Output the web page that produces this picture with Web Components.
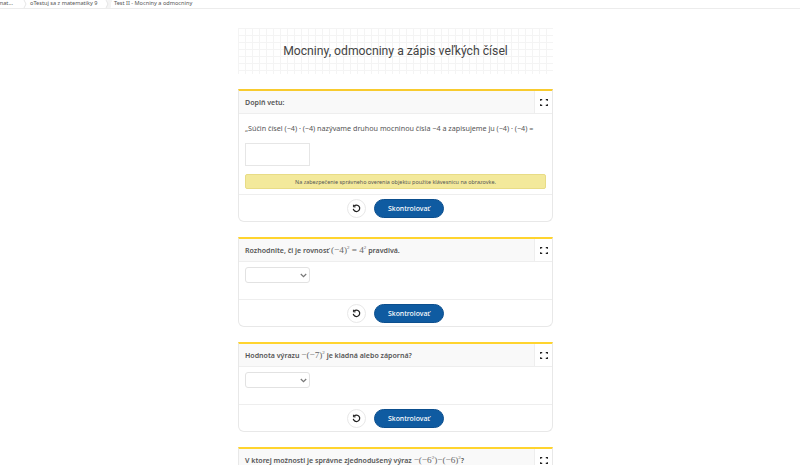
<!DOCTYPE html>
<html lang="sk">
<head>
<meta charset="utf-8">
<title>Test II - Mocniny a odmocniny</title>
<style>
  html, body { margin: 0; height: 465px; overflow: hidden; background: #fff; }
  body { font-family: "Noto Sans", "Liberation Sans", sans-serif; color: #444; }
  i.m { font-family: "Liberation Serif", serif; font-style: normal; font-weight: 400; font-size: 9.2px; color: #666; }
  i.m sup { font-size: 5px; line-height: 0; vertical-align: 4px; }
</style>
</head>
<body>
<crumb-bar></crumb-bar>
<test-page>
  <title-banner>Mocniny, odmocniny a zápis veľkých čísel</title-banner>

  <task-card style="height:133px; --accent:#f8cb2e">
    <span slot="head">Doplň vetu:</span>
    <p-line>„Súčin čísel (−4) · (−4) nazývame druhou mocninou čísla −4 a zapisujeme ju (−4) · (−4) =</p-line>
    <text-box></text-box>
    <note-bar>Na zabezpečenie správneho overenia objektu použite klávesnicu na obrazovke.</note-bar>
  </task-card>

  <task-card style="height:90px">
    <span slot="head">Rozhodnite, či je rovnosť <i class="m">(−4)<sup>2</sup> = 4<sup>2</sup></i> pravdivá.</span>
    <select-box></select-box>
  </task-card>

  <task-card style="height:90px">
    <span slot="head">Hodnota výrazu <i class="m">−(−7)<sup>2</sup></i> je kladná alebo záporná?</span>
    <select-box></select-box>
  </task-card>

  <task-card style="height:90px">
    <span slot="head">V ktorej možnosti je správne zjednodušený výraz <i class="m">−(−6<sup>2</sup>)−(−6)<sup>2</sup></i>?</span>
  </task-card>
</test-page>

<script>
// small helper, every element just stamps its own template in the shadow root
function stamp(el, html) {
  el.attachShadow({ mode: 'open' }).innerHTML = html;
}

class CrumbBar extends HTMLElement {
  connectedCallback() {
    stamp(this, `
      <style>
        :host { display: flex; height: 8px; border-bottom: 1px solid #ececec;
                font-size: 5.6px; line-height: 6px; color: #555; }
        span { white-space: nowrap; width: var(--w); }
        svg { flex: none; }
        .now { flex: 1; }
        .first { margin-left: -2px; }
        .wedge { background: linear-gradient(100deg, #fff 30%, #f4f4f4 32%, #f4f4f4 68%, #fff 70%); }
      </style>
      <span class="first" style="--w:24px">mat...</span>
      <svg width="8" height="8" viewBox="0 0 8 8" fill="none" stroke="#e6e6e6"><path d="M2 0l2 4-2 4"/></svg>
      <span style="--w:74px">oTestuj sa z matematiky 9</span>
      <svg class="wedge" width="10" height="8" viewBox="0 0 10 8" fill="none" stroke="#e6e6e6"><path d="M2 0l2 4-2 4"/></svg>
      <span class="now">Test II - Mocniny a odmocniny</span>`);
  }
}

class TestPage extends HTMLElement {
  connectedCallback() {
    stamp(this, `
      <style>
        :host { display: flex; flex-direction: column; gap: 15px; width: 315px; margin: 19px 0 0 238px; }
      </style>
      <slot></slot>`);
  }
}

class TitleBanner extends HTMLElement {
  connectedCallback() {
    stamp(this, `
      <style>
        :host { display: flex; align-items: center; justify-content: center; height: 46px;
                font-family: "Roboto", sans-serif; font-size: 12.2px; color: #444; white-space: nowrap;
                background-color: #fff;
                background-image:
                  linear-gradient(#f4f4f4 1px, transparent 1px),
                  linear-gradient(90deg, #f4f4f4 1px, transparent 1px);
                background-size: 7px 7px; }
      </style>
      <slot></slot>`);
  }
}

class TaskCard extends HTMLElement {
  connectedCallback() {
    stamp(this, `
      <style>
        :host { display: flex; flex-direction: column; box-sizing: border-box; overflow: hidden;
                border: 1px solid #e8e8e8; border-top: 2px solid var(--accent, #ffd42e); border-radius: 0 0 6px 6px; background: #fff; }
        .head { display: flex; height: 22px; flex: none; background: #f9f9f9; border-bottom: 1px solid #eee;
                font-size: 7.05px; font-weight: 600; color: #555; }
        .head span { flex: 1; display: flex; align-items: center; padding-left: 6px; white-space: pre; }
        .full { width: 17px; display: flex; align-items: center; justify-content: center;
                background: #fff; border-left: 1px solid #eee; }
        .body { flex: 1; display: flex; flex-direction: column; padding: 5px 6px 0; min-height: 0; }
        .foot { display: flex; flex: none; height: 27px; box-sizing: border-box; align-items: center; justify-content: center; gap: 8px;
                border-top: 1px solid #eee; }
        .undo { width: 19px; height: 19px; box-sizing: border-box; border: 1px solid #e8e8e8; border-radius: 50%;
                display: flex; align-items: center; justify-content: center; background: #fff; }
        .check { width: 70px; height: 19px; box-sizing: border-box; border-radius: 10px; background: #0f5ba1; color: #fff;
                 border: 1px solid #0c4f8e; display: flex; align-items: center; justify-content: center; font-size: 6.9px; font-weight: 500; }
      </style>
      <div class="head">
        <span><slot name="head"></slot></span>
        <div class="full">
          <svg width="8" height="7" viewBox="0 0 8 7" fill="none" stroke="#222" stroke-width="1.2">
            <path d="M2.2.6H.6v1.2M5.8.6h1.6v1.2M7.4 5.2v1.2H5.8M2.2 6.4H.6V5.2"/>
          </svg>
        </div>
      </div>
      <div class="body"><slot></slot></div>
      <div class="foot">
        <div class="undo">
          <svg width="9" height="9" viewBox="0 0 10 10" fill="none" stroke="#222" stroke-width="1.4">
            <path d="M2.2 2.4A3.6 3.6 0 1 1 1.4 5.4"/><path d="M1.6 .8v2.4h2.4" stroke-width="1.1"/>
          </svg>
        </div>
        <div class="check">Skontrolovať</div>
      </div>`);
  }
}

class PLine extends HTMLElement {
  connectedCallback() {
    stamp(this, `
      <style>
        :host { display: block; font-size: 7.2px; line-height: 12px; color: #555; white-space: nowrap; margin: 3px 0 9px; }
      </style>
      <slot></slot>`);
  }
}

class TextBox extends HTMLElement {
  connectedCallback() {
    stamp(this, `
      <style>
        :host { display: block; width: 65px; height: 23px; box-sizing: border-box; border: 1px solid #e6e6e6; background: #fff; }
      </style>`);
  }
}

class NoteBar extends HTMLElement {
  connectedCallback() {
    stamp(this, `
      <style>
        :host { display: flex; align-items: center; justify-content: center; height: 15px; margin-top: 8px; box-sizing: border-box;
                background: #f3e99b; border: 1px solid #e8dc86; border-radius: 2px;
                font-size: 5.45px; color: #555; white-space: nowrap; }
      </style>
      <slot></slot>`);
  }
}

class SelectBox extends HTMLElement {
  connectedCallback() {
    stamp(this, `
      <style>
        :host { display: flex; align-items: center; justify-content: flex-end; width: 65px; height: 16px; box-sizing: border-box;
                border: 1px solid #e2e2e2; border-radius: 3px; background: #fff; padding-right: 2px; }
      </style>
      <svg width="7" height="5" viewBox="0 0 7 5" fill="none" stroke="#777" stroke-width="1.2"><path d="M.8 1l2.7 2.7L6.2 1"/></svg>`);
  }
}

customElements.define('crumb-bar', CrumbBar);
customElements.define('test-page', TestPage);
customElements.define('title-banner', TitleBanner);
customElements.define('task-card', TaskCard);
customElements.define('p-line', PLine);
customElements.define('text-box', TextBox);
customElements.define('note-bar', NoteBar);
customElements.define('select-box', SelectBox);
</script>
</body>
</html>
